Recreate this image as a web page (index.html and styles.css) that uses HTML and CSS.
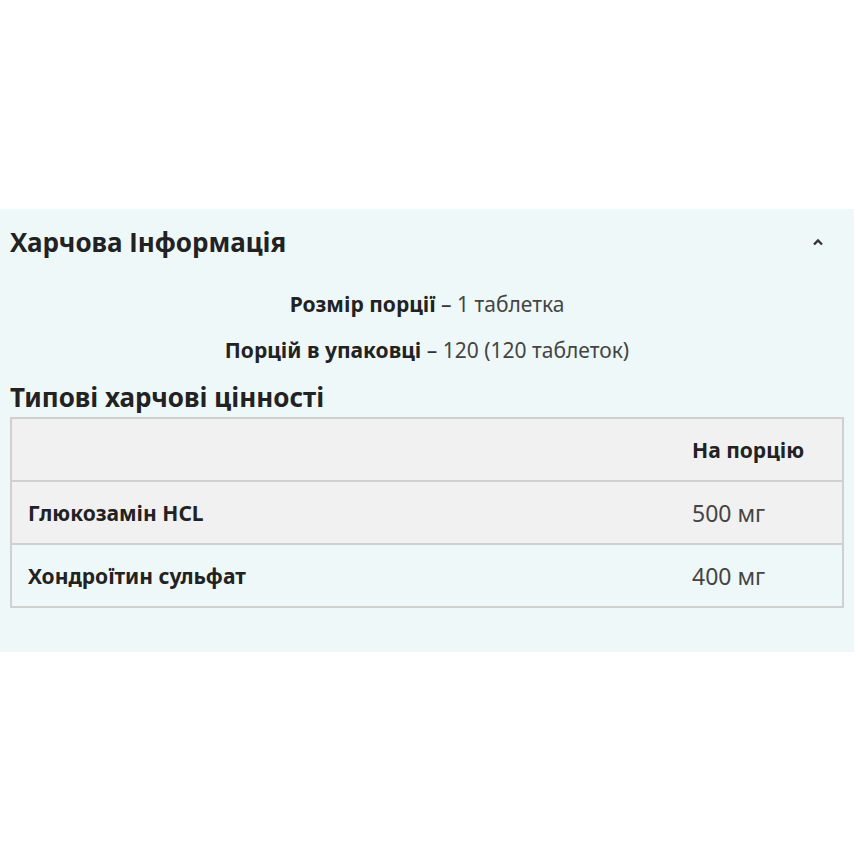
FILE: index.html
```html
<!DOCTYPE html>
<html lang="uk">
<head>
<meta charset="utf-8">
<link rel="stylesheet" href="styles.css">
</head>
<body>
<section class="panel">
  <div class="panel-head">
    <h2 class="panel-title">Харчова Інформація</h2>
    <svg class="chevron" width="12" height="8" viewBox="0 0 12 8"><path d="M2 6.5 L6 2.5 L10 6.5" fill="none" stroke="#333" stroke-width="2.4"/></svg>
  </div>
  <div class="serving">
    <p class="serving-line"><strong>Розмір порції</strong> – <span class="val">1 таблетка</span></p>
    <p class="serving-line"><strong>Порцій в упаковці</strong> – <span class="val">120 (120 таблеток)</span></p>
  </div>
  <h3 class="sub-title">Типові харчові цінності</h3>
  <table class="nutri">
    <tr class="row-head"><th class="c-name"></th><th class="c-val">На порцію</th></tr>
    <tr class="row-odd"><td class="c-name">Глюкозамін HCL</td><td class="c-val val">500 мг</td></tr>
    <tr class="row-even"><td class="c-name">Хондроїтин сульфат</td><td class="c-val val">400 мг</td></tr>
  </table>
</section>
</body>
</html>
```
FILE: styles.css
```css
html, body { margin: 0; padding: 0; background: #fff; }
body { padding-top: 209px; font-family: "Noto Sans", "Open Sans", sans-serif; color: #222; }
.panel { width: 854px; box-sizing: border-box; background: #eef8f9; padding: 0 10px 44px; }
.panel-head { height: 66px; display: flex; align-items: center; justify-content: space-between; }
.panel-title { margin: 0; font-size: 26px; font-weight: 700; color: #222; line-height: 32px; }
.chevron { margin-right: 20px; }
.serving { padding-top: 6px; }
.serving-line { margin: 0; height: 46px; line-height: 46px; text-align: center; font-size: 21px; color: #333; }
.serving-line strong { font-weight: 700; color: #222; }
.val { font-family: "Noto Sans", sans-serif; font-weight: 400; color: #444; }
.sub-title { margin: 8px 0 0; font-size: 26px; font-weight: 700; line-height: 32px; height: 36px; color: #222; }
.nutri { width: 100%; border-collapse: collapse; border: 2px solid #d0d0d0; }
.nutri th, .nutri td { height: 61px; padding: 0 16px; border-bottom: 2px solid #d0d0d0; font-size: 21px; text-align: left; }
.nutri th { font-weight: 700; color: #222; }
.nutri td.c-name { font-weight: 700; color: #222; }
.c-val { width: 134px; padding-left: 0 !important; }
.c-name { padding-left: 16px; }
.row-head { background: #f1f1f1; }
.row-odd { background: #f1f1f1; }
.row-even { background: #eef8f9; }
.nutri td.val { font-size: 23px; color: #444; }
```
